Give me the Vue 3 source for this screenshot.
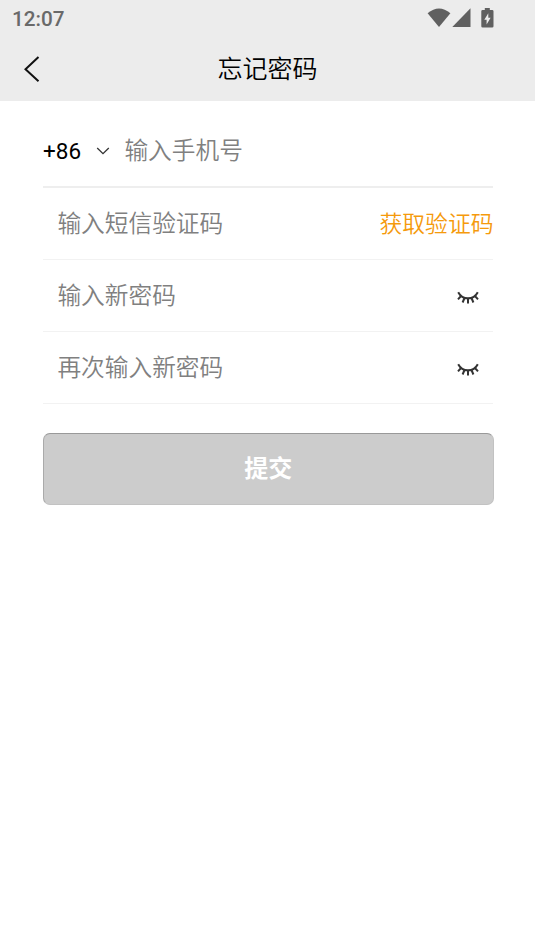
<script setup>
const passwordFields = ['输入新密码', '再次输入新密码']
</script>

<template>
  <div class="screen">
    <header class="top">
      <div class="status">
        <span class="time">12:07</span>
        <div class="indicators">
          <svg class="wifi" width="24" height="20" viewBox="0 0 24 20"><path d="M.6 5.200Q12-4.200 23.400 5.200L12 19Z" /></svg>
          <svg class="signal" width="19" height="19" viewBox="0 0 19 19"><path d="M18.500.3V19H.3Z" /></svg>
          <svg class="battery" width="13" height="20" viewBox="0 0 13 20">
            <path fill-rule="evenodd" d="M3.800 0h5v2h2.400q1.300 0 1.300 1.300v15q0 1.300-1.300 1.300H1.600Q.3 19.600.3 18.300V3.300Q.3 2 1.600 2h2.200ZM7.300 5.300 3.300 11.800h2.300v4.700l4-6.700H7.300Z" />
          </svg>
        </div>
      </div>
      <nav class="nav">
        <svg class="back" width="18" height="28" viewBox="0 0 18 28"><path d="M15.500 2 2.500 14.200 15.500 26.300" /></svg>
        <h1>忘记密码</h1>
        <span></span>
      </nav>
    </header>

    <main class="form">
      <div class="row phone">
        <span class="code">+86</span>
        <svg class="chevron" width="14" height="8" viewBox="0 0 14 8"><path d="M1.200 1 7 6.700 12.800 1" /></svg>
        <span class="hint">输入手机号</span>
      </div>
      <div class="row">
        <span class="hint">输入短信验证码</span>
        <span class="send">获取验证码</span>
      </div>
      <div v-for="label in passwordFields" :key="label" class="row">
        <span class="hint">{{ label }}</span>
        <svg class="eye" width="22" height="14" viewBox="0 0 22 14">
          <path d="M1.200 1.200Q4.500 7.300 11 7.300T20.800 1.200M4 5 1 8.300M7.500 7 5.600 11.500M11 7.300V12.600M14.500 7 16.400 11.500M18 5 21 8.300" />
        </svg>
      </div>
      <button class="submit">提交</button>
    </main>
  </div>
</template>

<style>
body {
  margin: 0;
  background: #fff;
}
</style>

<style scoped>
.screen {
  min-height: 951px;
  background: #fff;
  font-family: Roboto, "Noto Sans CJK SC", sans-serif;
  color: #000;
}
.top {
  height: 101px;
  background: #ececec;
}
.status {
  display: flex;
  justify-content: space-between;
  height: 37px;
  padding: 0 41px 0 12px;
}
.time {
  font-size: 20.7px;
  font-weight: 500;
  line-height: 38px;
  color: #696969;
}
.indicators {
  display: flex;
  align-items: flex-start;
  padding-top: 8px;
  fill: #606060;
}
.signal {
  margin: 0 10px 0 1px;
}
.nav {
  display: grid;
  grid-template-columns: 18px 1fr 18px;
  align-items: center;
  height: 64px;
  padding: 0 23px;
}
.back,
.chevron,
.eye {
  fill: none;
  stroke: #111;
}
.back {
  stroke-width: 2;
}
h1 {
  margin: 0;
  padding-top: 2px;
  text-align: center;
  font-size: 25px;
  line-height: 36px;
  font-weight: 350;
}
.form {
  padding: 15px 42px 0 43px;
}
.row {
  display: flex;
  align-items: center;
  justify-content: space-between;
  box-sizing: border-box;
  height: 72px;
  padding-left: 14.4px;
  border-bottom: 1px solid #f2f2f2;
}
.phone {
  justify-content: flex-start;
  padding-left: 0;
  border-bottom: 2px solid #eee;
}
.code {
  width: 53px;
  font-size: 22.5px;
}
.chevron {
  margin-right: 14.4px;
  stroke: #333;
  stroke-width: 1.3;
}
.hint {
  padding-top: 1px;
  font-size: 23.7px;
  line-height: 36px;
  font-weight: 350;
  color: #808080;
}
.phone .hint {
  padding: 0 0 1px;
}
.send {
  padding-top: 2px;
  margin-right: -0.5px;
  font-size: 22.8px;
  line-height: 36px;
  font-weight: 350;
  color: #f59a0c;
}
.eye {
  margin: 5px 14px 0 0;
  stroke: #333;
  stroke-width: 2;
}
.submit {
  display: block;
  width: 450.5px;
  height: 71.5px;
  margin: 29px 0 0;
  padding: 0;
  border: 1px solid #c2c2c2;
  border-top-color: #999;
  border-left-color: #aaa;
  border-radius: 7px;
  background: #ccc;
  color: #fff;
  font: 700 24px/36px Roboto, "Noto Sans CJK SC", sans-serif;
}
</style>
